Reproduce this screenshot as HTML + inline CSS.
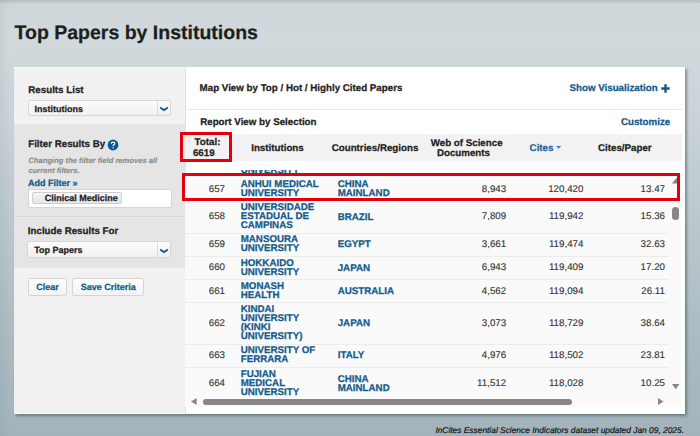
<!DOCTYPE html>
<html><head><meta charset="utf-8"><style>
*{margin:0;padding:0;box-sizing:border-box}
html,body{width:700px;height:436px;overflow:hidden;text-rendering:geometricPrecision}
body{position:relative;font-family:"Liberation Sans", sans-serif;color:#222;
background:linear-gradient(90deg,rgba(60,80,95,.06) 0px,rgba(60,80,95,0) 10px),linear-gradient(180deg,#bbc1c4 0px,#bdc3c6 2px,#cdd4d7 3.5px,#d0d7da 6px,#d1d9dc 40px,#c9d3d8 120px,#bbc8ce 220px,#aebdc4 320px,#a2b3bb 436px);}
.a{position:absolute;white-space:nowrap;line-height:1;-webkit-text-stroke:0.25px currentColor}
.b{font-weight:bold}
.n{-webkit-text-stroke:0.12px currentColor}
.blue{color:#135a8b}
</style></head>
<body>
<div class="a b" style="left:14.5px;top:23.69px;font-size:19.5px;color:#1e1e1e;">Top Papers by Institutions</div>
<div style="position:absolute;left:14px;top:67px;width:670.6px;height:347px;background:#fff;box-shadow:1.5px 1.5px 2.5px rgba(40,60,70,.45);"></div>
<div style="position:absolute;left:14px;top:67px;width:171px;height:57px;background:#f1f1f1;border-top:1px solid #fafafa;"></div>
<div style="position:absolute;left:14px;top:124px;width:171px;height:93px;background:#e5e5e5;border-bottom:1px solid #dadada;"></div>
<div style="position:absolute;left:14px;top:217px;width:171px;height:50.7px;background:#e5e5e5;border-top:1px solid #ebebeb;"></div>
<div style="position:absolute;left:14px;top:267.7px;width:171px;height:146.3px;background:#f1f1f1;border-bottom:1px solid #fafafa;"></div>
<div style="position:absolute;left:184.5px;top:67px;width:1px;height:347px;background:#e2e2e2;"></div>
<div class="a b" style="left:28.3px;top:85.65px;font-size:9.75px;">Results List</div>
<div style="position:absolute;left:27.6px;top:99.8px;width:143px;height:16.6px;background:linear-gradient(#fbfbfb,#f1f1f1);border:1px solid #d6d6d6;border-radius:2px;"></div>
<div style="position:absolute;left:157.1px;top:100.8px;width:1px;height:14.600000000000001px;background:#dcdcdc;"></div>
<div class="a b" style="left:34.4px;top:104.58px;font-size:9px;">Institutions</div>
<svg style="position:absolute;left:158.9px;top:105.39999999999999px" width="10" height="7" viewBox="0 0 10 7"><path d="M1.1 2.5 L5 5.1 L8.9 2.5" fill="none" stroke="#135a8b" stroke-width="1.8"/></svg>
<div class="a b" style="left:28.2px;top:140.35px;font-size:9.75px;">Filter Results By</div>
<svg style="position:absolute;left:107px;top:139.2px" width="12" height="12" viewBox="0 0 12 12"><circle cx="6" cy="6" r="5.4" fill="#0d5a8e"/><path d="M4.3 4.7 C4.3 3.6 5.1 3.1 6.1 3.1 C7.1 3.1 7.8 3.7 7.8 4.5 C7.8 5.5 6.4 5.7 6.1 6.6 L6.1 7.1" fill="none" stroke="#fff" stroke-width="1.15"/><circle cx="6.1" cy="8.7" r="0.7" fill="#fff"/></svg>
<div class="a b" style="left:28.5px;top:157.37px;font-size:7.6px;font-style:italic;color:#8f8f8f;-webkit-text-stroke:0.2px currentColor;">Changing the filter field removes all</div>
<div class="a b" style="left:28.5px;top:166.67px;font-size:7.6px;font-style:italic;color:#8f8f8f;-webkit-text-stroke:0.2px currentColor;">current filters.</div>
<div class="a b" style="left:28px;top:179.48px;font-size:9px;color:#135a8b;">Add Filter »</div>
<div style="position:absolute;left:27.5px;top:188.6px;width:144px;height:19.2px;background:#fff;border:1px solid #d4d4d4;border-radius:2px;"></div>
<div style="position:absolute;left:31.9px;top:191.6px;width:90.3px;height:12.9px;background:linear-gradient(#f6f6f6,#e6e6e6);border:1px solid #cfcfcf;border-radius:2px;"></div>
<div class="a b" style="left:44.7px;top:193.88px;font-size:9px;">Clinical Medicine</div>
<div class="a b" style="left:27.8px;top:226.75px;font-size:9.75px;">Include Results For</div>
<div style="position:absolute;left:27.4px;top:241.3px;width:143.2px;height:17.0px;background:linear-gradient(#fbfbfb,#f1f1f1);border:1px solid #d6d6d6;border-radius:2px;"></div>
<div style="position:absolute;left:157.1px;top:242.3px;width:1px;height:15.0px;background:#dcdcdc;"></div>
<div class="a b" style="left:34.199999999999996px;top:246.08px;font-size:9px;">Top Papers</div>
<svg style="position:absolute;left:158.9px;top:246.9px" width="10" height="7" viewBox="0 0 10 7"><path d="M1.1 2.5 L5 5.1 L8.9 2.5" fill="none" stroke="#135a8b" stroke-width="1.8"/></svg>
<div style="position:absolute;left:27.8px;top:278.2px;width:39.1px;height:17.7px;background:linear-gradient(#fdfdfd,#f3f3f3);border:1px solid #d4d4d4;border-radius:2px;"></div>
<div class="a b" style="left:36.3px;top:282.88px;font-size:9px;color:#135a8b;">Clear</div>
<div style="position:absolute;left:72.3px;top:278.2px;width:71.6px;height:17.7px;background:linear-gradient(#fdfdfd,#f3f3f3);border:1px solid #d4d4d4;border-radius:2px;"></div>
<div class="a b" style="left:80.8px;top:282.88px;font-size:9px;color:#135a8b;">Save Criteria</div>
<div class="a b" style="left:199.6px;top:84.25px;font-size:9.75px;">Map View by Top / Hot / Highly Cited Papers</div>
<div class="a b" style="left:569.5px;top:84.45px;font-size:9.75px;color:#135a8b;">Show Visualization</div>
<svg style="position:absolute;left:661px;top:84.2px" width="9" height="9" viewBox="0 0 9 9"><path d="M4.5 0.3 V8.7 M0.3 4.5 H8.7" stroke="#135a8b" stroke-width="2.4"/></svg>
<div style="position:absolute;left:185px;top:109px;width:498px;height:1px;background:#e9e9e9;"></div>
<div class="a b" style="left:200.2px;top:117.75px;font-size:9.75px;">Report View by Selection</div>
<div class="a b" style="left:620.9px;top:117.85px;font-size:9.75px;color:#135a8b;">Customize</div>
<div style="position:absolute;left:185px;top:134.4px;width:497px;height:26.3px;background:#f2f2f2;"></div>
<div class="a b" style="left:194.6px;top:137.85px;font-size:9.75px;">Total:</div>
<div class="a b" style="left:192.9px;top:149.15px;font-size:9.75px;">6619</div>
<div class="a b" style="left:251.2px;top:143.65px;font-size:9.75px;">Institutions</div>
<div class="a b" style="left:331.7px;top:143.65px;font-size:9.75px;">Countries/Regions</div>
<div class="a b" style="left:430.7px;top:138.65px;font-size:9.75px;">Web of Science</div>
<div class="a b" style="left:436.9px;top:149.15px;font-size:9.75px;">Documents</div>
<div class="a b" style="left:529.6px;top:143.65px;font-size:9.75px;color:#2a64a0;">Cites</div>
<svg style="position:absolute;left:556px;top:145.6px" width="6" height="4" viewBox="0 0 6 4"><path d="M0 0 H5.2 L2.6 2.8Z" fill="#3d7ccc"/></svg>
<div class="a b" style="left:598.0px;top:143.65px;font-size:9.75px;">Cites/Paper</div>
<div style="position:absolute;left:185px;top:176px;width:495.7px;height:231.3px;background:#fafafa;"></div>
<div style="position:absolute;left:185px;top:170px;width:484px;height:227px;overflow:hidden"><div class="a b" style="left:55.70px;top:-13.27px;font-size:9.75px;color:#135a8b">XXXXXX</div><div class="a b" style="left:55.70px;top:-4.27px;font-size:9.75px;color:#135a8b">UNIVERSITY</div><div class="a b" style="left:152.70px;top:-8.40px;font-size:9.75px;color:#135a8b">XXXX</div><div class="a n" style="right:444.00px;top:-8.58px;font-size:9.75px;color:#333333">656</div><div class="a n" style="right:162.80px;top:-8.58px;font-size:9.75px;color:#333333">0,000</div><div class="a n" style="right:85.60px;top:-8.58px;font-size:9.75px;color:#333333">120,000</div><div class="a n" style="right:4.00px;top:-8.58px;font-size:9.75px;color:#333333">00.00</div><div style="position:absolute;left:0;top:30px;width:484px;height:1px;background:#ececec"></div><div class="a b" style="left:55.70px;top:9.98px;font-size:9.75px;color:#135a8b">ANHUI MEDICAL</div><div class="a b" style="left:55.70px;top:18.98px;font-size:9.75px;color:#135a8b">UNIVERSITY</div><div class="a b" style="left:152.70px;top:10.35px;font-size:9.75px;color:#135a8b">CHINA</div><div class="a b" style="left:152.70px;top:19.35px;font-size:9.75px;color:#135a8b">MAINLAND</div><div class="a n" style="right:444.00px;top:14.67px;font-size:9.75px;color:#333333">657</div><div class="a n" style="right:162.80px;top:14.67px;font-size:9.75px;color:#333333">8,943</div><div class="a n" style="right:85.60px;top:14.67px;font-size:9.75px;color:#333333">120,420</div><div class="a n" style="right:4.00px;top:14.67px;font-size:9.75px;color:#333333">13.47</div><div style="position:absolute;left:0;top:63px;width:484px;height:1px;background:#ececec"></div><div class="a b" style="left:55.70px;top:33.23px;font-size:9.75px;color:#135a8b">UNIVERSIDADE</div><div class="a b" style="left:55.70px;top:42.23px;font-size:9.75px;color:#135a8b">ESTADUAL DE</div><div class="a b" style="left:55.70px;top:51.23px;font-size:9.75px;color:#135a8b">CAMPINAS</div><div class="a b" style="left:152.70px;top:42.60px;font-size:9.75px;color:#135a8b">BRAZIL</div><div class="a n" style="right:444.00px;top:42.42px;font-size:9.75px;color:#333333">658</div><div class="a n" style="right:162.80px;top:42.42px;font-size:9.75px;color:#333333">7,809</div><div class="a n" style="right:85.60px;top:42.42px;font-size:9.75px;color:#333333">119,942</div><div class="a n" style="right:4.00px;top:42.42px;font-size:9.75px;color:#333333">15.36</div><div style="position:absolute;left:0;top:86px;width:484px;height:1px;background:#ececec"></div><div class="a b" style="left:55.70px;top:65.48px;font-size:9.75px;color:#135a8b">MANSOURA</div><div class="a b" style="left:55.70px;top:74.48px;font-size:9.75px;color:#135a8b">UNIVERSITY</div><div class="a b" style="left:152.70px;top:70.35px;font-size:9.75px;color:#135a8b">EGYPT</div><div class="a n" style="right:444.00px;top:70.17px;font-size:9.75px;color:#333333">659</div><div class="a n" style="right:162.80px;top:70.17px;font-size:9.75px;color:#333333">3,661</div><div class="a n" style="right:85.60px;top:70.17px;font-size:9.75px;color:#333333">119,474</div><div class="a n" style="right:4.00px;top:70.17px;font-size:9.75px;color:#333333">32.63</div><div style="position:absolute;left:0;top:109px;width:484px;height:1px;background:#ececec"></div><div class="a b" style="left:55.70px;top:88.73px;font-size:9.75px;color:#135a8b">HOKKAIDO</div><div class="a b" style="left:55.70px;top:97.73px;font-size:9.75px;color:#135a8b">UNIVERSITY</div><div class="a b" style="left:152.70px;top:93.60px;font-size:9.75px;color:#135a8b">JAPAN</div><div class="a n" style="right:444.00px;top:93.42px;font-size:9.75px;color:#333333">660</div><div class="a n" style="right:162.80px;top:93.42px;font-size:9.75px;color:#333333">6,943</div><div class="a n" style="right:85.60px;top:93.42px;font-size:9.75px;color:#333333">119,409</div><div class="a n" style="right:4.00px;top:93.42px;font-size:9.75px;color:#333333">17.20</div><div style="position:absolute;left:0;top:132px;width:484px;height:1px;background:#ececec"></div><div class="a b" style="left:55.70px;top:111.98px;font-size:9.75px;color:#135a8b">MONASH</div><div class="a b" style="left:55.70px;top:120.98px;font-size:9.75px;color:#135a8b">HEALTH</div><div class="a b" style="left:152.70px;top:116.85px;font-size:9.75px;color:#135a8b">AUSTRALIA</div><div class="a n" style="right:444.00px;top:116.67px;font-size:9.75px;color:#333333">661</div><div class="a n" style="right:162.80px;top:116.67px;font-size:9.75px;color:#333333">4,562</div><div class="a n" style="right:85.60px;top:116.67px;font-size:9.75px;color:#333333">119,094</div><div class="a n" style="right:4.00px;top:116.67px;font-size:9.75px;color:#333333">26.11</div><div style="position:absolute;left:0;top:174px;width:484px;height:1px;background:#ececec"></div><div class="a b" style="left:55.70px;top:135.23px;font-size:9.75px;color:#135a8b">KINDAI</div><div class="a b" style="left:55.70px;top:144.23px;font-size:9.75px;color:#135a8b">UNIVERSITY</div><div class="a b" style="left:55.70px;top:153.23px;font-size:9.75px;color:#135a8b">(KINKI</div><div class="a b" style="left:55.70px;top:162.23px;font-size:9.75px;color:#135a8b">UNIVERSITY)</div><div class="a b" style="left:152.70px;top:149.10px;font-size:9.75px;color:#135a8b">JAPAN</div><div class="a n" style="right:444.00px;top:148.92px;font-size:9.75px;color:#333333">662</div><div class="a n" style="right:162.80px;top:148.92px;font-size:9.75px;color:#333333">3,073</div><div class="a n" style="right:85.60px;top:148.92px;font-size:9.75px;color:#333333">118,729</div><div class="a n" style="right:4.00px;top:148.92px;font-size:9.75px;color:#333333">38.64</div><div style="position:absolute;left:0;top:197px;width:484px;height:1px;background:#ececec"></div><div class="a b" style="left:55.70px;top:176.48px;font-size:9.75px;color:#135a8b">UNIVERSITY OF</div><div class="a b" style="left:55.70px;top:185.48px;font-size:9.75px;color:#135a8b">FERRARA</div><div class="a b" style="left:152.70px;top:181.35px;font-size:9.75px;color:#135a8b">ITALY</div><div class="a n" style="right:444.00px;top:181.17px;font-size:9.75px;color:#333333">663</div><div class="a n" style="right:162.80px;top:181.17px;font-size:9.75px;color:#333333">4,976</div><div class="a n" style="right:85.60px;top:181.17px;font-size:9.75px;color:#333333">118,502</div><div class="a n" style="right:4.00px;top:181.17px;font-size:9.75px;color:#333333">23.81</div><div style="position:absolute;left:0;top:229px;width:484px;height:1px;background:#ececec"></div><div class="a b" style="left:55.70px;top:199.73px;font-size:9.75px;color:#135a8b">FUJIAN</div><div class="a b" style="left:55.70px;top:208.73px;font-size:9.75px;color:#135a8b">MEDICAL</div><div class="a b" style="left:55.70px;top:217.73px;font-size:9.75px;color:#135a8b">UNIVERSITY</div><div class="a b" style="left:152.70px;top:204.60px;font-size:9.75px;color:#135a8b">CHINA</div><div class="a b" style="left:152.70px;top:213.60px;font-size:9.75px;color:#135a8b">MAINLAND</div><div class="a n" style="right:444.00px;top:208.92px;font-size:9.75px;color:#333333">664</div><div class="a n" style="right:162.80px;top:208.92px;font-size:9.75px;color:#333333">11,512</div><div class="a n" style="right:85.60px;top:208.92px;font-size:9.75px;color:#333333">118,028</div><div class="a n" style="right:4.00px;top:208.92px;font-size:9.75px;color:#333333">10.25</div></div>
<svg style="position:absolute;left:671.8px;top:177.9px" width="9" height="6" viewBox="0 0 9 6"><path d="M0 5.6 H8.4 L4.2 0Z" fill="#878787"/></svg>
<div style="position:absolute;left:671.8px;top:206.9px;width:7.1px;height:13.3px;background:#878787;border-radius:3.55px;"></div>
<svg style="position:absolute;left:671.6px;top:384.4px" width="8" height="6" viewBox="0 0 8 6"><path d="M0 0 H7.4 L3.7 5.2Z" fill="#878787"/></svg>
<svg style="position:absolute;left:191.2px;top:398.2px" width="6" height="7" viewBox="0 0 6 7"><path d="M5.7 0 V6.9 L0 3.45Z" fill="#878787"/></svg>
<div style="position:absolute;left:202.9px;top:398.5px;width:368.8px;height:6.5px;background:#878787;border-radius:3.25px;"></div>
<svg style="position:absolute;left:657.8px;top:398.3px" width="6" height="7" viewBox="0 0 6 7"><path d="M0 0 V6.9 L5.5 3.45Z" fill="#878787"/></svg>
<div style="position:absolute;left:180.4px;top:132.2px;width:51.2px;height:30.2px;border:3px solid #e3000c;"></div>
<div style="position:absolute;left:182px;top:172.8px;width:497.6px;height:28.2px;border:3px solid #e3000c;"></div>
<div class="a n" style="right:16.0px;top:426.49px;font-size:8.4px;text-align:right;font-style:italic;color:#151515;-webkit-text-stroke:0.2px currentColor;">InCites Essential Science Indicators dataset updated Jan 09, 2025.</div>
</body></html>
